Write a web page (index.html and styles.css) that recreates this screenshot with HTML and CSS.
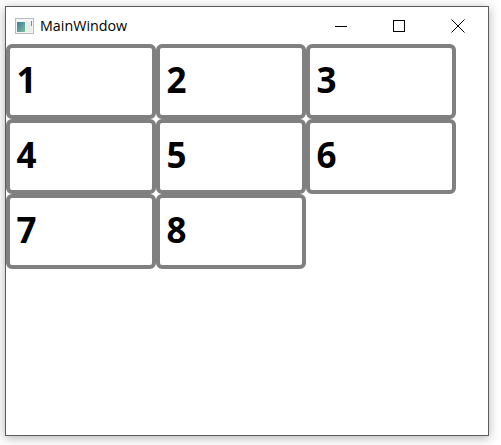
FILE: index.html

```html
<!DOCTYPE html>
<html lang="en">
<head>
<meta charset="UTF-8" />
<title>MainWindow</title>
<link rel="stylesheet" href="styles.css">
</head>
<body>
<div class="window">
  <div class="titlebar">
    <svg class="app-icon" width="19" height="16" viewBox="0 0 19 16">
      <defs>
        <linearGradient id="pane" x1="0" y1="0" x2="1" y2="1">
          <stop offset="0" stop-color="#3f78a8" />
          <stop offset="1" stop-color="#7fbf94" />
        </linearGradient>
      </defs>
      <rect x="0.5" y="0.5" width="18" height="15" fill="#f4f5f5" stroke="#b9bcc0" />
      <rect x="2" y="4" width="8" height="10" fill="url(#pane)" />
      <rect x="10" y="4" width="7" height="10" fill="#e6eeea" />
      <rect x="16" y="3" width="1" height="5" fill="#5f9a94" />
    </svg>
    <span class="title">MainWindow</span>
    <div class="controls">
      <button class="control"><svg width="12" height="12" viewBox="0 0 12 12"><path d="M0 6.5H12" stroke="#000" fill="none" /></svg></button>
      <button class="control"><svg width="12" height="12" viewBox="0 0 12 12"><rect x="0.5" y="0.5" width="11" height="11" stroke="#000" fill="none" /></svg></button>
      <button class="control close"><svg width="14" height="14" viewBox="0 0 14 14"><path d="M0.5 0.5L13.5 13.5M13.5 0.5L0.5 13.5" stroke="#000" fill="none" /></svg></button>
    </div>
  </div>
  <div class="grid">
    <div class="cell">1</div>
    <div class="cell">2</div>
    <div class="cell">3</div>
    <div class="cell">4</div>
    <div class="cell">5</div>
    <div class="cell">6</div>
    <div class="cell">7</div>
    <div class="cell">8</div>
  </div>
</div>
</body>
</html>
```

FILE: styles.css

```css
* { box-sizing: border-box; }
html, body {
  margin: 0; padding: 0; height: 100%;
  background: #fff;
  overflow: hidden;
}

body {
  padding: 6px 12px 9px 5px;
  font-family: "Open Sans", sans-serif;
}

.window {
  height: 430px;
  width: 484px;
  background: #fff;
  border: 1px solid #5c5c5c;
  box-shadow: 0 2px 10px rgba(0, 0, 0, 0.3);
}

.titlebar {
  display: flex;
  align-items: center;
  height: 37px;
  padding-left: 9px;
}

.app-icon {
  flex: none;
}

.title {
  margin-left: 6px;
  font-size: 14.3px;
  color: #000;
}

.controls {
  display: flex;
  margin-left: auto;
  margin-right: 1px;
}

.control {
  display: flex;
  align-items: center;
  justify-content: center;
  width: 58px;
  height: 37px;
  padding: 0;
  border: 0;
  background: none;
}

.close {
  margin-left: 1px;
}

.grid {
  display: grid;
  grid-template-columns: repeat(3, 150px);
  grid-auto-rows: 75px;
}

.cell {
  display: flex;
  align-items: center;
  padding: 0 0 4px 6.5px;
  border: 4px solid #808080;
  border-radius: 6px;
  background: #fff;
  font-size: 35px;
  font-weight: 700;
  color: #000;
}
```
